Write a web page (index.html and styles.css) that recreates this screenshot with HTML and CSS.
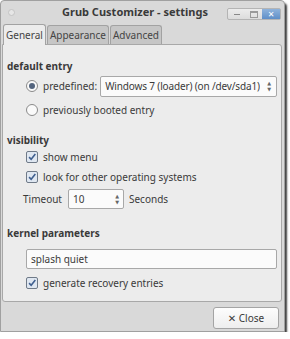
FILE: index.html
```html
<!DOCTYPE html>
<html lang="en">
  <head>
  <link rel="stylesheet" href="styles.css">
  </head>
  <body>
    <div class="window">
      <div class="titlebar">
        <span class="dot"></span>
        <span class="title">Grub Customizer - settings</span>
        <div class="wm-buttons">
          <span class="wm-btn"><span class="minbar"></span></span>
          <span class="wm-btn"><span class="maxbox"></span></span>
          <span class="wm-btn close">&#10005;</span>
        </div>
      </div>
      <div class="tabs">
        <div class="tab active">General</div>
        <div class="tab">Appearance</div>
        <div class="tab">Advanced</div>
      </div>
      <div class="panel">
        <h3 class="first">default entry</h3>
        <div class="row indent radio-row">
          <span class="radio checked"></span>
          <label>predefined:</label>
          <div class="combo">
            <span class="combo-text">Windows 7 (loader) (on /dev/sda1)</span>
            <span class="arrows">&#9650;<br>&#9660;</span>
          </div>
        </div>
        <div class="row indent radio-row second">
          <span class="radio"></span>
          <label>previously booted entry</label>
        </div>

        <h3 class="vis">visibility</h3>
        <div class="row indent check-row">
          <span class="check"><svg viewBox="0 0 12 12"><path d="M2.5 6.2 L5 8.8 L10 2.5" /></svg></span>
          <label>show menu</label>
        </div>
        <div class="row indent check-row">
          <span class="check"><svg viewBox="0 0 12 12"><path d="M2.5 6.2 L5 8.8 L10 2.5" /></svg></span>
          <label>look for other operating systems</label>
        </div>
        <div class="row timeout">
          <label>Timeout</label>
          <div class="spin">
            <span>10</span>
            <span class="arrows">&#9650;<br>&#9660;</span>
          </div>
          <label>Seconds</label>
        </div>

        <h3 class="kern">kernel parameters</h3>
        <div class="entry">splash quiet</div>
        <div class="row indent check-row recovery">
          <span class="check"><svg viewBox="0 0 12 12"><path d="M2.5 6.2 L5 8.8 L10 2.5" /></svg></span>
          <label>generate recovery entries</label>
        </div>
      </div>
      <div class="footer">
        <button class="btn">&#10005; Close</button>
      </div>
    </div>
  </body>
</html>
```

FILE: styles.css
```css
html, body { padding: 0; margin: 0; background: #fff; }
body { color: #3a3a3a; font: 10px/1.2 "Noto Sans", "DejaVu Sans", sans-serif; }
.window {
  width: 285px; height: 332px; box-sizing: border-box;
  background: #d9d9d9; border: 1px solid #a0a0a0; border-radius: 4px 4px 0 0;
  box-shadow: 2px 3px 2px rgba(0, 0, 0, .75);
  display: flex; flex-direction: column;
}
.titlebar { height: 22px; display: flex; align-items: center; padding: 0 3px 0 7px; flex: none; }
.dot { width: 5px; height: 5px; border: 1px solid #c4c4c4; border-radius: 50%; background: #e6e6e6; }
.title { flex: 1; text-align: center; font-weight: bold; color: #3a3a3a; font-size: 11px; padding-left: 28px; }
.wm-buttons { display: flex; border: 1px solid #b4b4b4; border-radius: 2px; background: linear-gradient(#ececec, #dcdcdc); height: 10px; margin-top: 4px; }
.wm-btn { width: 17px; display: flex; align-items: center; justify-content: center; }
.minbar { width: 6px; height: 1px; background: #888; margin-top: 1px; }
.maxbox { width: 6px; height: 4px; border: 1px solid #999; border-top-width: 2px; }
.wm-btn.close { width: 18px; background: linear-gradient(#8fb3dc, #5f8fc8); color: #fff; font-size: 8px; font-weight: bold; }
.tabs { display: flex; padding-left: 2px; height: 21px; flex: none; align-items: flex-end; }
.tab {
  height: 18px; padding: 0 2px; margin-right: 1px; line-height: 19px;
  background: #c6c6c6; border: 1px solid #a2a2a2; border-bottom: none;
  border-radius: 3px 3px 0 0; color: #444;
}
.tab.active { background: #ececec; height: 20px; line-height: 21px; margin-bottom: -1px; position: relative; z-index: 1; }
.panel {
  margin: 0 2px 0 1px; height: 258px; box-sizing: border-box; flex: none;
  background: #ececec; border: 1px solid #a8a8a8; border-radius: 0 3px 3px 3px;
  padding: 0 4px 0 4px;
}
h3 { margin: 11px 0 0 0; font-size: 10px; font-weight: bold; color: #3a3a3a; height: 16px; line-height: 16px; }
h3.first { margin-top: 13px; }
h3.kern { margin-top: 16px; }
.row { display: flex; align-items: center; white-space: nowrap; }
.radio-row { height: 22px; margin-top: 1px; }
.radio-row.second { margin-top: 2px; }
.check-row { height: 20px; }
.vis + .check-row { margin-top: -1px; }
.check-row.recovery { margin-top: 4px; }
.indent { padding-left: 19px; }
label { margin-left: 5px; }
.radio {
  width: 10px; height: 10px; border: 1px solid #8a8a8a; border-radius: 50%;
  background: #fafafa; position: relative; flex: none;
}
.radio.checked::after {
  content: ""; position: absolute; left: 2px; top: 2px; width: 6px; height: 6px;
  border-radius: 50%; background: #53647e;
}
.check {
  width: 10px; height: 10px; border: 1px solid #6f7a88; border-radius: 2px;
  background: #dfe7f1; display: flex; flex: none;
}
.check svg { width: 10px; height: 10px; }
.check path { fill: none; stroke: #3f5f8f; stroke-width: 1.9; }
.combo {
  margin-left: 3px; flex: 1; min-width: 0; height: 21px; box-sizing: border-box;
  border: 1px solid #a8a8a8; border-radius: 2px; background: #fbfbfb;
  display: flex; align-items: center; justify-content: space-between; padding: 0 5px 0 4px;
}
.combo-text { white-space: nowrap; overflow: hidden; letter-spacing: -0.15px; }
.arrows { font-size: 5px; line-height: 6px; color: #666; text-align: center; flex: none; }
.timeout { height: 20px; margin-top: 2px; padding-left: 16px; }
.timeout label:first-child { margin-left: 0; }
.spin {
  margin-left: 6px; width: 56px; height: 20px; box-sizing: border-box;
  border: 1px solid #a8a8a8; border-radius: 2px; background: #fbfbfb;
  display: flex; align-items: center; justify-content: space-between; padding: 0 4px 0 4px;
}
.entry {
  margin: 8px 0 0 19px; height: 20px; box-sizing: border-box;
  border: 1px solid #a8a8a8; border-radius: 2px; background: #fbfbfb;
  line-height: 18px; padding: 0 4px;
}
.footer { flex: 1; display: flex; justify-content: flex-end; align-items: flex-start; padding: 5px 5px 0 0; }
.btn {
  font: inherit; color: #3a3a3a; width: 66px; height: 22px; padding: 0;
  border: 1px solid #a4a4a4; border-radius: 3px;
  background: linear-gradient(#fdfdfd, #eeeeee);
}
```
